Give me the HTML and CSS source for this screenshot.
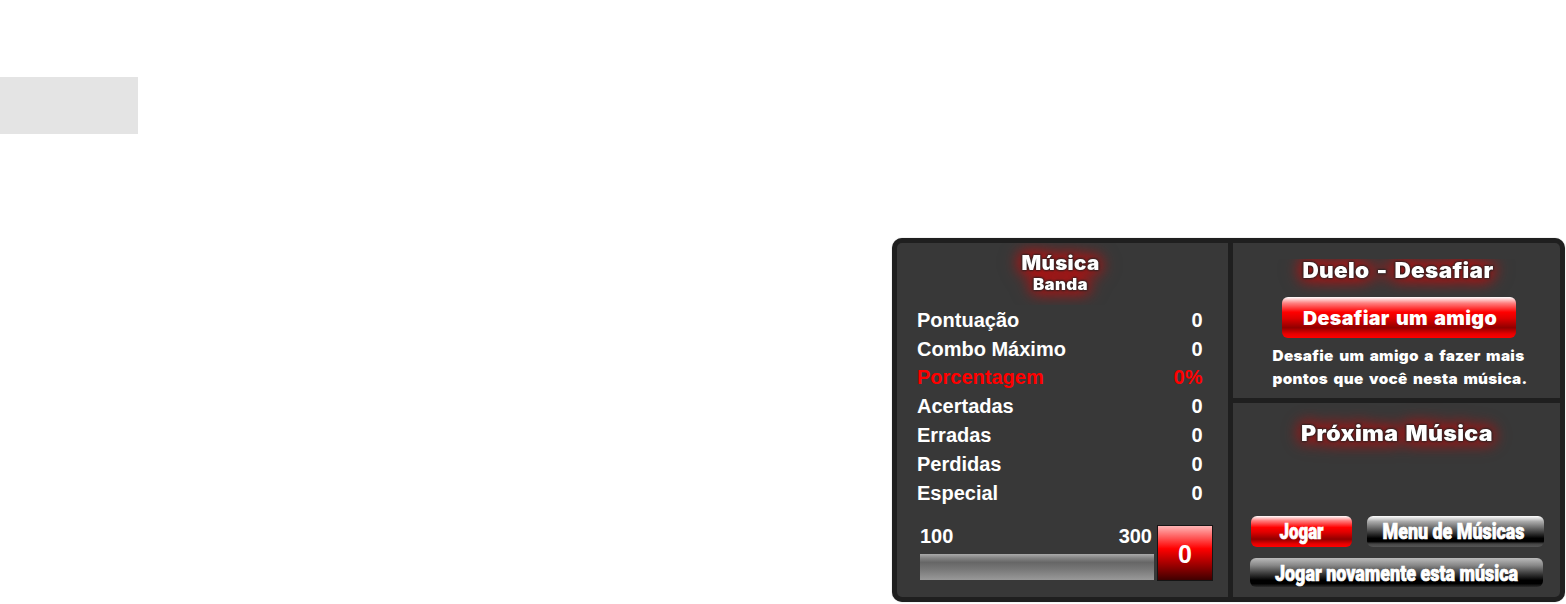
FILE: index.html
```html
<!DOCTYPE html>
<html lang="pt-BR">
<head>
<meta charset="utf-8">
<title>Resultado</title>
<link rel="stylesheet" href="styles.css">
</head>
<body>
<div class="placeholder"></div>
<main class="panel">
  <section class="score">
    <svg class="score-title" width="331" height="62">
      <g class="glow">
        <text class="black" x="124.5" y="27" font-size="19.5" textLength="78" lengthAdjust="spacingAndGlyphs">Música</text>
        <text class="black" x="136" y="46.7" font-size="15.5" textLength="55" lengthAdjust="spacingAndGlyphs">Banda</text>
      </g>
    </svg>
    <dl class="stats">
      <div class="row"><dt>Pontuação</dt><dd>0</dd></div>
      <div class="row"><dt>Combo Máximo</dt><dd>0</dd></div>
      <div class="row highlight"><dt>Porcentagem</dt><dd>0%</dd></div>
      <div class="row"><dt>Acertadas</dt><dd>0</dd></div>
      <div class="row"><dt>Erradas</dt><dd>0</dd></div>
      <div class="row"><dt>Perdidas</dt><dd>0</dd></div>
      <div class="row"><dt>Especial</dt><dd>0</dd></div>
    </dl>
    <div class="level">
      <div class="progress">
        <div class="limits"><span>100</span><span>300</span></div>
        <div class="bar"></div>
      </div>
      <div class="total">0</div>
    </div>
  </section>
  <div class="side">
    <section class="duel">
      <svg class="duel-title" width="327" height="38">
        <g class="glow"><text class="black" x="69.5" y="18.5" font-size="21" textLength="191" lengthAdjust="spacingAndGlyphs">Duelo - Desafiar</text></g>
      </svg>
      <button class="btn red challenge">
        <svg width="234" height="40"><text class="black" x="21" y="26.5" font-size="19" textLength="194" lengthAdjust="spacingAndGlyphs">Desafiar um amigo</text></svg>
      </button>
      <svg class="duel-text" width="327" height="54">
        <text class="black" x="39.5" y="23.4" font-size="14.5" textLength="252" lengthAdjust="spacingAndGlyphs">Desafie um amigo a fazer mais</text>
        <text class="black" x="39.5" y="46.4" font-size="14.5" textLength="255" lengthAdjust="spacingAndGlyphs">pontos que você nesta música.</text>
      </svg>
    </section>
    <section class="next">
      <svg class="next-title" width="327" height="70">
        <g class="glow soft"><text class="black" x="68" y="38.3" font-size="21" textLength="192" lengthAdjust="spacingAndGlyphs">Próxima Música</text></g>
      </svg>
      <div class="actions">
        <button class="btn red play">
          <svg width="101" height="31"><text class="narrow" x="28.5" y="23" font-size="22" textLength="44" lengthAdjust="spacingAndGlyphs">Jogar</text></svg>
        </button>
        <button class="btn dark menu">
          <svg width="177" height="31"><text class="narrow" x="15.5" y="23" font-size="22" textLength="142" lengthAdjust="spacingAndGlyphs">Menu de Músicas</text></svg>
        </button>
      </div>
      <button class="btn dark again">
        <svg width="293" height="29"><text class="narrow" x="25" y="23" font-size="21.5" textLength="243" lengthAdjust="spacingAndGlyphs">Jogar novamente esta música</text></svg>
      </button>
    </section>
  </div>
</main>
</body>
</html>
```
FILE: styles.css
```css
* { box-sizing: border-box; }
body {
  margin: 0;
  padding-top: 77px;
  height: 604px;
  overflow: hidden;
  background: #fff;
  font-family: "Liberation Sans", Arial, sans-serif;
  color: #fff;
}
svg { display: block; overflow: visible; }
.placeholder { width: 138px; height: 57px; background: #e4e4e4; }
.panel {
  display: grid;
  grid-template-columns: 331px 327px;
  column-gap: 5px;
  width: 673px;
  height: 364px;
  margin: 104px 0 0 892px;
  padding: 5px;
  border-radius: 10px;
  background: #1f1f1f;
  box-shadow: 0 0 1px #888;
}
.score, .duel, .next { background: #383838; }
.score { border-radius: 5px 0 0 5px; }
.score-title { clip-path: inset(0); }
.black {
  font-family: Inter, "Open Sans", sans-serif;
  font-weight: 900;
  letter-spacing: .3px;
  word-spacing: 2px;
  fill: #fff;
}
.narrow {
  font-family: Roboto, "Open Sans", sans-serif;
  font-weight: 900;
  fill: #fff;
  stroke: #fff;
  stroke-width: .7px;
}
.glow {
  filter: drop-shadow(0 0 1px #222) drop-shadow(0 0 1px #222) drop-shadow(0 0 8px rgba(230, 0, 0, .75)) drop-shadow(0 0 7px rgba(220, 0, 0, .5));
}
.glow.soft {
  filter: drop-shadow(0 0 1px #222) drop-shadow(0 0 1px #222) drop-shadow(0 0 8px rgba(210, 0, 0, .65)) drop-shadow(0 0 7px rgba(210, 0, 0, .45));
}
.stats { margin: 0; padding: .8px 25.5px 0 20px; }
.row {
  display: flex;
  justify-content: space-between;
  height: 28.85px;
  line-height: 28.85px;
  font-size: 20px;
  font-weight: bold;
}
.row dd { margin: 0; }
.highlight { color: #f00; }
.level { display: flex; gap: 3px; padding: 17.8px 0 0 23px; }
.progress { width: 234px; }
.limits {
  display: flex;
  justify-content: space-between;
  height: 28px;
  padding-right: 2px;
  line-height: 20px;
  font-size: 20px;
  font-weight: bold;
}
.bar {
  height: 26px;
  background: linear-gradient(#aaa, #858585 15%, #666 32%, #777 58%, #999);
}
.total {
  width: 56px;
  height: 56px;
  margin-top: -1px;
  border: 1px solid #151515;
  background: linear-gradient(#ffb5b5, #f00 42%, #400000);
  line-height: 56px;
  text-align: center;
  font-size: 25px;
  font-weight: bold;
}
.side { display: grid; grid-template-rows: 155px 194px; row-gap: 5px; }
.duel { padding-top: 16px; border-radius: 0 5px 0 0; }
.duel-title { clip-path: inset(0 0 -10px); }
.next { border-radius: 0 0 5px 0; }
.btn { display: block; padding: 0; border: 0; border-radius: 6px; }
.red { background: linear-gradient(#fff, #ff8080 15%, #f00 37%, #e00000 52%, #900000 75%, #e80000 90%, #f00); }
.dark { background: linear-gradient(#fff, #aaa 18%, #555 45%, #000 72%, #000 82%, #444 90%, #555); }
.challenge { width: 234px; height: 41px; margin-left: 49px; }
.play { width: 101px; height: 31px; }
.menu { width: 177px; height: 31px; }
.actions { display: flex; gap: 15px; padding: 43px 0 0 18px; }
.again {
  width: 293px;
  height: 29px;
  margin: 11px 0 0 17px;
  background: linear-gradient(#bbb, #888 25%, #444 50%, #000 77%, #000 88%, #2c2c2c);
}
```
